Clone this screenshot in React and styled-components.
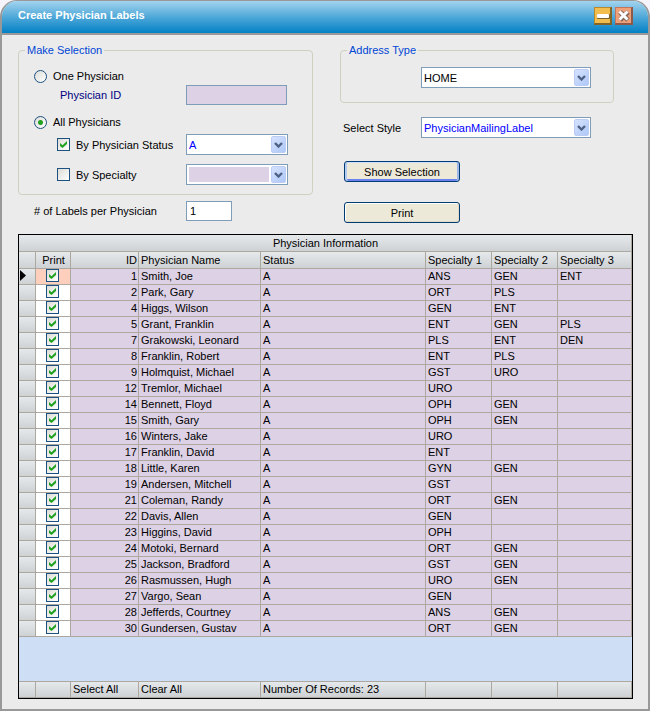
import React, { useState } from "react";
import styled, { createGlobalStyle, css } from "styled-components";

const GlobalStyle = createGlobalStyle`
  *, *::before, *::after { box-sizing: border-box; }
  body {
    margin: 0;
    background: #f4f4fa;
    font: 11px/14px "Liberation Sans", Arial, sans-serif;
    color: #000;
  }
  button, input, select { font: inherit; color: inherit; margin: 0; }
`;

const line = "#aca8a0";
const lilac = "#ddd1e5";
const metal = "linear-gradient(#e6e9ec, #ced2d5)";

const Window = styled.main`
  border: 2px solid #999;
  border-top-width: 1px;
  border-radius: 17px 17px 0 0;
  background: #ebebeb;
  overflow: hidden;
`;

const TitleBar = styled.header`
  display: flex;
  align-items: center;
  gap: 3px;
  height: 34px;
  padding: 0 15px 2px 16px;
  border-bottom: 2px solid #999;
  background: linear-gradient(#a3d4ef, #4fa8d8 50%, #0380c6);
`;

const Title = styled.h1`
  flex: 1;
  margin: 0;
  padding-bottom: 3px;
  font-size: 11px;
  line-height: 14px;
  color: #fff;
`;

const CaptionButton = styled.button`
  display: block;
  width: 18px;
  height: 18px;
  padding: 0;
  border: 0;
  background: none;
  svg { display: block; }
`;

const Form = styled.form`
  display: grid;
  grid-template-columns: 295fr 274fr;
  column-gap: 27px;
  padding: 8px 34px 0 16px;
`;

const Group = styled.fieldset`
  min-width: 0;
  margin: 0;
  padding: 0;
  border: 1px solid #d0d0bf;
  border-radius: 4px;
`;

const GroupBody = styled.div`
  padding: ${(p) => p.$pad};
`;

const Legend = styled.legend`
  margin-left: 6px;
  padding: 0 2px;
  line-height: 14px;
  color: #0046d5;
`;

const Row = styled.div`
  display: grid;
  grid-template-columns: ${(p) => p.$label || 152}px auto;
  justify-content: start;
  align-items: center;
  min-height: ${(p) => p.$h || 21}px;
  margin-top: ${(p) => p.$gap || 0}px;
`;

const Label = styled.label`
  display: flex;
  align-items: center;
  gap: 6px;
  padding-left: ${(p) => p.$indent || 0}px;
  color: ${(p) => (p.$navy ? "#000080" : "#000")};
`;

const Radio = styled.input.attrs({ type: "radio" })`
  appearance: none;
  width: 13px;
  height: 13px;
  border: 1px solid #1c5180;
  border-radius: 50%;
  background: linear-gradient(135deg, #dcdcd7, #fff);
  &:checked {
    background: radial-gradient(circle, #21a121 0 2px, transparent 3px), linear-gradient(135deg, #dcdcd7, #fff);
  }
`;

const Check = styled.input.attrs({ type: "checkbox" })`
  appearance: none;
  display: block;
  flex: none;
  width: 13px;
  height: 13px;
  border: 1px solid #1c5180;
  background: linear-gradient(135deg, #dcdcd7, #fff);
  &:checked::before {
    content: "";
    display: block;
    width: 7px;
    height: 7px;
    margin: 2px;
    background: #21a121;
    clip-path: polygon(0 28%, 36% 60%, 100% 0, 100% 44%, 36% 100%, 0 72%);
  }
`;

const TextBox = styled.input.attrs({ type: "text" })`
  width: ${(p) => p.$w}px;
  height: 20px;
  padding: 0 3px;
  border: 1px solid #7f9db9;
  border-radius: 0;
  background: #fff;
  &:disabled { background: ${lilac}; }
`;

const Combo = styled.div`
  display: grid;
  grid-template-columns: 1fr 15px;
  width: ${(p) => p.$w}px;
  height: 21px;
  padding: 1px;
  border: 1px solid #7f9db9;
  background: #fff;
`;

const Select = styled.select`
  appearance: none;
  grid-area: 1 / 1 / 2 / 3;
  width: 100%;
  padding: 0 18px 0 1px;
  border: 0;
  outline: 0;
  background: transparent;
  color: ${(p) => (p.$blue ? "#0000ff" : "#000")};
  opacity: 1;
  ${(p) =>
    p.disabled &&
    css`
      width: calc(100% - 18px);
      margin: 1px;
      background: ${lilac};
    `}
`;

const Arrow = styled.span`
  grid-area: 1 / 2;
  display: grid;
  place-items: center;
  border: 1px solid #bccdf5;
  border-radius: 2px;
  background: linear-gradient(135deg, #d6e2fd, #aec8f7);
  pointer-events: none;
`;

const PushButton = styled.button`
  display: block;
  width: 116px;
  height: 21px;
  margin: ${(p) => p.$top}px 0 0 4px;
  padding: 0;
  border: 1px solid #003c74;
  border-radius: 3px;
  background: #ece9d8;
  box-shadow: ${(p) =>
    p.$default
      ? "inset 2px 0 #b6cbf0, inset -2px 0 #9db7e8, inset 0 1px #cee0ff, inset 0 -2px #6982ee"
      : "inset 1px 1px #fff, inset -1px -1px #e0dac8"};
`;

const Grid = styled.table`
  width: calc(100% - 31px);
  margin: 11px 15px 10px 16px;
  border: 1px solid #000;
  border-collapse: separate;
  border-spacing: 0;
  table-layout: fixed;
  background: #cedff5;
`;

const Col = styled.col`
  width: ${(p) => (p.$w ? p.$w + "px" : "auto")};
`;

const Cell = styled.td`
  height: 16px;
  padding: 0 1px 0 2px;
  border-right: 1px solid ${line};
  border-bottom: 1px solid ${line};
  background: ${(p) => p.$bg || lilac};
  line-height: 15px;
  text-align: ${(p) => p.$align || "left"};
  vertical-align: top;
  white-space: nowrap;
  overflow: hidden;
  svg { display: block; margin: 1px 0 0 -1px; }
`;

const HeadCell = styled(Cell).attrs({ as: "th", $bg: metal })`
  height: 17px;
  padding-top: 1px;
  font-weight: normal;
`;

const CheckCell = styled(Cell)`
  padding: 0 12px 0 10px;
`;

const Filler = styled.td`
  height: 45px;
  padding: 0;
  border-bottom: 1px solid ${line};
`;

const LinkButton = styled.button`
  display: block;
  padding: 0;
  border: 0;
  background: none;
  line-height: 15px;
`;

const widths = [17, 35, 68, 122, 0, 66, 66, 74];

const physicians = [
  [1, "Smith, Joe", "ANS", "GEN", "ENT"],
  [2, "Park, Gary", "ORT", "PLS"],
  [4, "Higgs, Wilson", "GEN", "ENT"],
  [5, "Grant, Franklin", "ENT", "GEN", "PLS"],
  [7, "Grakowski, Leonard", "PLS", "ENT", "DEN"],
  [8, "Franklin, Robert", "ENT", "PLS"],
  [9, "Holmquist, Michael", "GST", "URO"],
  [12, "Tremlor, Michael", "URO"],
  [14, "Bennett, Floyd", "OPH", "GEN"],
  [15, "Smith, Gary", "OPH", "GEN"],
  [16, "Winters, Jake", "URO"],
  [17, "Franklin, David", "ENT"],
  [18, "Little, Karen", "GYN", "GEN"],
  [19, "Andersen, Mitchell", "GST"],
  [21, "Coleman, Randy", "ORT", "GEN"],
  [22, "Davis, Allen", "GEN"],
  [23, "Higgins, David", "OPH"],
  [24, "Motoki, Bernard", "ORT", "GEN"],
  [25, "Jackson, Bradford", "GST", "GEN"],
  [26, "Rasmussen, Hugh", "URO", "GEN"],
  [27, "Vargo, Sean", "GEN"],
  [28, "Jefferds, Courtney", "ANS", "GEN"],
  [30, "Gundersen, Gustav", "ORT", "GEN"],
];

function CaptionIcon({ close }) {
  return (
    <svg width="18" height="18" viewBox="0 0 18 18" aria-hidden="true">
      <rect width="18" height="18" fill={close ? "#8d5a4a" : "#806428"} />
      <path d="M0 17V0h17l-1 1H1v15z" fill={close ? "#c4755a" : "#b98a2c"} />
      <rect x="1" y="1" width="15" height="15" fill={close ? "#f0a078" : "#f2bd4c"} />
      {close ? (
        <>
          <path d="M5 5l8 8M13 5l-8 8" stroke="#80685c" strokeWidth="5" />
          <path d="M4.500 4.500l8 8M12.500 4.500l-8 8" stroke="#fff" strokeWidth="3" />
        </>
      ) : (
        <>
          <rect x="3" y="7" width="13" height="5" rx="1" fill="#77622f" />
          <rect x="3" y="7" width="12" height="4" rx="1" fill="#fff" />
        </>
      )}
    </svg>
  );
}

function ComboBox({ id, width, options = [], blue, disabled, label }) {
  return (
    <Combo $w={width}>
      <Select id={id} $blue={blue} disabled={disabled} aria-label={label}>
        {options.map((o) => (
          <option key={o}>{o}</option>
        ))}
      </Select>
      <Arrow>
        <svg width="9" height="6" viewBox="0 0 9 6" aria-hidden="true">
          <path d="M1 1l3.5 3.5L8 1" fill="none" stroke="#4d6185" strokeWidth="2.400" />
        </svg>
      </Arrow>
    </Combo>
  );
}

export default function App() {
  const [checked, setChecked] = useState(() => new Set(physicians.map((p) => p[0])));
  const toggle = (id) => {
    const next = new Set(checked);
    next.has(id) ? next.delete(id) : next.add(id);
    setChecked(next);
  };

  return (
    <>
      <GlobalStyle />
      <Window>
        <TitleBar>
          <Title>Create Physician Labels</Title>
          <CaptionButton type="button" aria-label="Minimize"><CaptionIcon /></CaptionButton>
          <CaptionButton type="button" aria-label="Close"><CaptionIcon close /></CaptionButton>
        </TitleBar>

        <Form onSubmit={(e) => e.preventDefault()}>
          <div>
            <Group>
              <Legend>Make Selection</Legend>
              <GroupBody $pad="10px 0 9px 15px">
                <Row $h={18}>
                  <Label><Radio name="scope" />One Physician</Label>
                </Row>
                <Row $h={20}>
                  <Label htmlFor="physician-id" $indent={26} $navy>Physician ID</Label>
                  <TextBox id="physician-id" $w={101} disabled />
                </Row>
                <Row $h={18} $gap={8}>
                  <Label><Radio name="scope" defaultChecked />All Physicians</Label>
                </Row>
                <Row $gap={3}>
                  <Label $indent={23}><Check defaultChecked />By Physician Status</Label>
                  <ComboBox width={102} options={["A"]} blue label="Physician status" />
                </Row>
                <Row $gap={9}>
                  <Label $indent={23}><Check />By Specialty</Label>
                  <ComboBox width={102} disabled label="Specialty" />
                </Row>
              </GroupBody>
            </Group>
            <Row $gap={6} $h={20} $label={168}>
              <Label htmlFor="label-count" $indent={16}># of Labels per Physician</Label>
              <TextBox id="label-count" $w={46} defaultValue="1" />
            </Row>
          </div>

          <div>
            <Group>
              <Legend>Address Type</Legend>
              <GroupBody $pad="10px 0 14px 80px">
                <ComboBox width={170} options={["HOME"]} label="Address type" />
              </GroupBody>
            </Group>
            <Row $gap={14} $label={81}>
              <Label htmlFor="style" $indent={3}>Select Style</Label>
              <ComboBox id="style" width={170} options={["PhysicianMailingLabel"]} blue />
            </Row>
            <PushButton type="submit" $top={23} $default>Show Selection</PushButton>
            <PushButton type="button" $top={20}>Print</PushButton>
          </div>
        </Form>

        <Grid>
          <colgroup>
            {widths.map((w, i) => <Col key={i} $w={w} />)}
          </colgroup>
          <thead>
            <tr>
              <HeadCell colSpan={8} $align="center">Physician Information</HeadCell>
            </tr>
            <tr>
              {["", "Print", "ID", "Physician Name", "Status", "Specialty 1", "Specialty 2", "Specialty 3"].map((h, i) => (
                <HeadCell key={i} $align={i === 1 ? "center" : i === 2 ? "right" : "left"}>{h}</HeadCell>
              ))}
            </tr>
          </thead>
          <tbody>
            {physicians.map(([id, name, s1, s2, s3], i) => (
              <tr key={id}>
                <Cell $bg={metal}>
                  {i === 0 && (
                    <svg width="6" height="11" viewBox="0 0 6 11" aria-hidden="true">
                      <path d="M0 0l6 5.5L0 11z" />
                    </svg>
                  )}
                </Cell>
                <CheckCell $bg={i === 0 ? "#ffcfbd" : "#fff"}>
                  <Check aria-label={`Print ${name}`} checked={checked.has(id)} onChange={() => toggle(id)} />
                </CheckCell>
                <Cell $align="right">{id}</Cell>
                <Cell>{name}</Cell>
                <Cell>A</Cell>
                <Cell>{s1}</Cell>
                <Cell>{s2}</Cell>
                <Cell>{s3}</Cell>
              </tr>
            ))}
          </tbody>
          <tfoot>
            <tr><Filler colSpan={8} /></tr>
            <tr>
              <Cell $bg={metal} />
              <Cell $bg={metal} />
              <Cell $bg={metal}>
                <LinkButton type="button" onClick={() => setChecked(new Set(physicians.map((p) => p[0])))}>Select All</LinkButton>
              </Cell>
              <Cell $bg={metal}>
                <LinkButton type="button" onClick={() => setChecked(new Set())}>Clear All</LinkButton>
              </Cell>
              <Cell $bg={metal}>Number Of Records: {physicians.length}</Cell>
              <Cell $bg={metal} />
              <Cell $bg={metal} />
              <Cell $bg={metal} />
            </tr>
          </tfoot>
        </Grid>
      </Window>
    </>
  );
}
